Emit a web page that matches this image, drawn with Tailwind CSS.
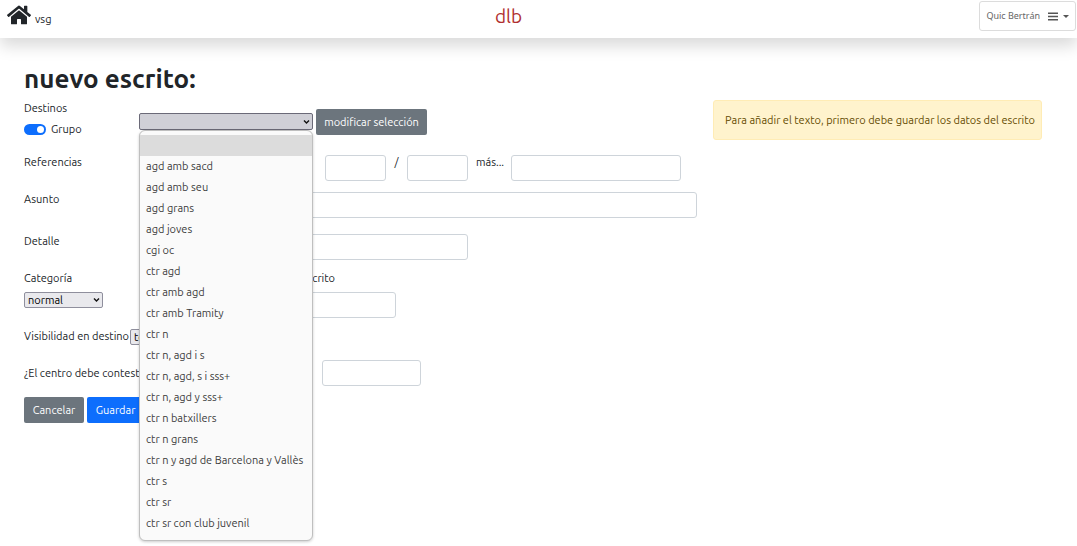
<!DOCTYPE html>
<html lang="es">
<head>
<meta charset="utf-8">
<meta name="viewport" content="width=device-width, initial-scale=1">
<title>nuevo escrito</title>
<script src="https://cdn.jsdelivr.net/npm/@tailwindcss/browser@4"></script>
</head>
<body class="min-h-screen bg-white font-['Ubuntu','Noto_Sans',sans-serif] text-[11px] leading-[14px] text-[#212529]">
<header class="grid h-[38px] grid-cols-[1fr_auto_1fr] items-start bg-white shadow-[0_8px_16px_rgba(0,0,0,0.15)]">
  <a href="#" class="flex items-end gap-1 pt-1 pl-[7px]">
    <svg class="h-[22px] w-6" viewBox="0 0 576 512" fill="currentColor" aria-hidden="true"><path d="M280.37 148.26L96 300.11V464a16 16 0 0 0 16 16l112.06-.29a16 16 0 0 0 15.92-16V368a16 16 0 0 1 16-16h64a16 16 0 0 1 16 16v95.64a16 16 0 0 0 16 16.05L464 480a16 16 0 0 0 16-16V300L295.67 148.26a12.19 12.19 0 0 0-15.3 0zM571.6 251.47L488 182.56V44.05a12 12 0 0 0-12-12h-56a12 12 0 0 0-12 12v72.61L318.47 43a48 48 0 0 0-61 0L4.34 251.47a12 12 0 0 0-1.6 16.9l25.5 31A12 12 0 0 0 45.15 301l235.22-193.74a12.19 12.19 0 0 1 15.3 0L530.9 301a12 12 0 0 0 16.9-1.6l25.5-31a12 12 0 0 0-1.7-16.93z"/></svg>
    <span>vsg</span>
  </a>
  <span class="pt-1 pr-15 text-[19px] leading-6 text-[#b03030]">dlb</span>
  <button type="button" class="mt-px mr-px flex h-[30px] items-center justify-self-end rounded-[3px] border border-[#dcdcdc] px-[6px] font-['Noto_Sans',sans-serif] text-[9px] text-[#666]">
    Quic Bertrán
    <svg class="ml-2 h-[9px] w-[10px]" viewBox="0 0 10 9" fill="#555" aria-hidden="true"><path d="M0 0.500h10v1.500H0zM0 3.700h10v1.500H0zM0 7h10v1.500H0z"/></svg>
    <svg class="ml-[5px] h-[3px] w-[6px]" viewBox="0 0 6 3" fill="#555" aria-hidden="true"><path d="M0 0h6L3 3z"/></svg>
  </button>
</header>

<main class="pt-[25px] pr-[35px] pl-6">
  <h1 class="text-[26px] leading-8 font-bold">nuevo escrito:</h1>
  <div class="mt-[5px] grid grid-cols-[minmax(0,673fr)_minmax(0,329fr)] items-start gap-4">
    <form>
      <div class="mb-[18px] flex h-[37px]">
        <div class="w-[115px] pt-px">
          <div>Destinos</div>
          <label class="mt-[7px] flex items-center gap-[5px]">
            <input type="checkbox" role="switch" checked class="peer sr-only">
            <span class="flex h-[11px] w-[22px] items-center justify-end rounded-full bg-[#0d6efd] pr-[2px]"><span class="size-[7px] rounded-full bg-white"></span></span>
            Grupo
          </label>
        </div>
        <div class="relative mt-[13px] mr-[3px] h-[17px] w-[174px]">
          <select aria-label="Destinos" class="block h-full w-full appearance-none rounded-[2px] border border-[#6b6a78] bg-[#d0d0d7]"><option></option></select>
          <svg class="pointer-events-none absolute top-[6px] right-[3px] h-[6px] w-[7px]" viewBox="0 0 7 6" fill="none" stroke="#111" stroke-width="1.4" aria-hidden="true"><path d="M1 1.500l2.500 2.500L6 1.500"/></svg>
          <ul role="listbox" aria-label="Grupos" class="absolute top-[17px] left-0 z-10 w-full rounded-[6px] border border-[#bfbfbf] bg-[#fafafa] pt-1 pb-[6px] leading-[21px] whitespace-nowrap text-[#3d3d3d] shadow-[0_1px_3px_rgba(0,0,0,0.2)]">
            <li role="option" aria-selected="true" class="h-[21px] bg-[#dcdcdc]"></li>
            <li role="option" class="px-[6px]">agd amb sacd</li>
            <li role="option" class="px-[6px]">agd amb seu</li>
            <li role="option" class="px-[6px]">agd grans</li>
            <li role="option" class="px-[6px]">agd joves</li>
            <li role="option" class="px-[6px]">cgi oc</li>
            <li role="option" class="px-[6px]">ctr agd</li>
            <li role="option" class="px-[6px]">ctr amb agd</li>
            <li role="option" class="px-[6px]">ctr amb Tramity</li>
            <li role="option" class="px-[6px]">ctr n</li>
            <li role="option" class="px-[6px]">ctr n, agd i s</li>
            <li role="option" class="px-[6px]">ctr n, agd, s i sss+</li>
            <li role="option" class="px-[6px]">ctr n, agd y sss+</li>
            <li role="option" class="px-[6px]">ctr n batxillers</li>
            <li role="option" class="px-[6px]">ctr n grans</li>
            <li role="option" class="px-[6px]">ctr n y agd de Barcelona y Vallès</li>
            <li role="option" class="px-[6px]">ctr s</li>
            <li role="option" class="px-[6px]">ctr sr</li>
            <li role="option" class="px-[6px]">ctr sr con club juvenil</li>
          </ul>
        </div>
        <button type="button" class="mt-[9px] h-[26px] w-[111px] rounded-[2px] bg-[#6c757d] text-white">modificar selección</button>
      </div>

      <div class="mb-[11px] flex">
        <label for="ref" class="w-[115px]">Referencias</label>
        <input id="ref" class="h-[26px] w-[174px] rounded-[3px] border border-[#ced4da] px-2">
        <input aria-label="Número" class="ml-3 h-[26px] w-[61px] rounded-[3px] border border-[#ced4da] px-2">
        <span class="w-[21px] text-center">/</span>
        <input aria-label="Año" class="h-[26px] w-[61px] rounded-[3px] border border-[#ced4da] px-2">
        <label for="mas" class="w-[43px] pl-2">más...</label>
        <input id="mas" class="h-[26px] w-[170px] rounded-[3px] border border-[#ced4da] px-2">
      </div>

      <div class="mb-4 flex">
        <label for="asunto" class="w-[115px]">Asunto</label>
        <input id="asunto" class="h-[26px] flex-1 rounded-[3px] border border-[#ced4da] px-2">
      </div>

      <div class="mb-[11px] flex">
        <label for="detalle" class="w-[115px]">Detalle</label>
        <input id="detalle" class="h-[26px] w-[329px] rounded-[3px] border border-[#ced4da] px-2">
      </div>

      <div class="mb-[11px] flex">
        <div class="w-[228px]">
          <label for="categoria" class="mb-[7px] block">Categoría</label>
          <div class="relative h-4 w-[79px]">
            <select id="categoria" class="block h-full w-full appearance-none rounded-[2px] border border-[#8f8f9d] bg-[#e9e9ed] pl-[3px] leading-[14px] text-black"><option>normal</option></select>
            <svg class="pointer-events-none absolute top-[5px] right-[3px] h-[6px] w-[7px]" viewBox="0 0 7 6" fill="none" stroke="#111" stroke-width="1.4" aria-hidden="true"><path d="M1 1.500l2.500 2.500L6 1.500"/></svg>
          </div>
        </div>
        <div class="w-36">
          <label for="fecha" class="mb-[7px] block w-[83px] text-right whitespace-nowrap">Fecha escrito</label>
          <input id="fecha" class="h-[26px] w-full rounded-[3px] border border-[#ced4da] px-2">
        </div>
      </div>

      <div class="mb-[15px] flex h-4 items-start">
        <label for="visibilidad" class="w-[106px] whitespace-nowrap">Visibilidad en destino</label>
        <select id="visibilidad" class="h-4 w-20 appearance-none rounded-[2px] border border-[#8f8f9d] bg-[#e9e9ed] pl-[3px] leading-[14px] text-black"><option>todos</option></select>
      </div>

      <div class="mb-[11px] flex">
        <label for="contestar" class="w-[298px] pt-[6px] whitespace-nowrap">¿El centro debe contestar?</label>
        <input id="contestar" class="h-[26px] w-[99px] rounded-[3px] border border-[#ced4da] px-2">
      </div>

      <div class="flex gap-[3px]">
        <button type="button" class="h-[26px] w-[60px] rounded-[2px] bg-[#6c757d] text-white">Cancelar</button>
        <button type="submit" class="h-[26px] w-[57px] rounded-[2px] bg-[#0d6efd] text-white">Guardar</button>
      </div>
    </form>
    <div role="alert" class="rounded-[3px] border border-[#ffecb5] bg-[#fff3cd] px-[11px] py-3 whitespace-nowrap text-[#664d03]">Para añadir el texto, primero debe guardar los datos del escrito</div>
  </div>
</main>
</body>
</html>
